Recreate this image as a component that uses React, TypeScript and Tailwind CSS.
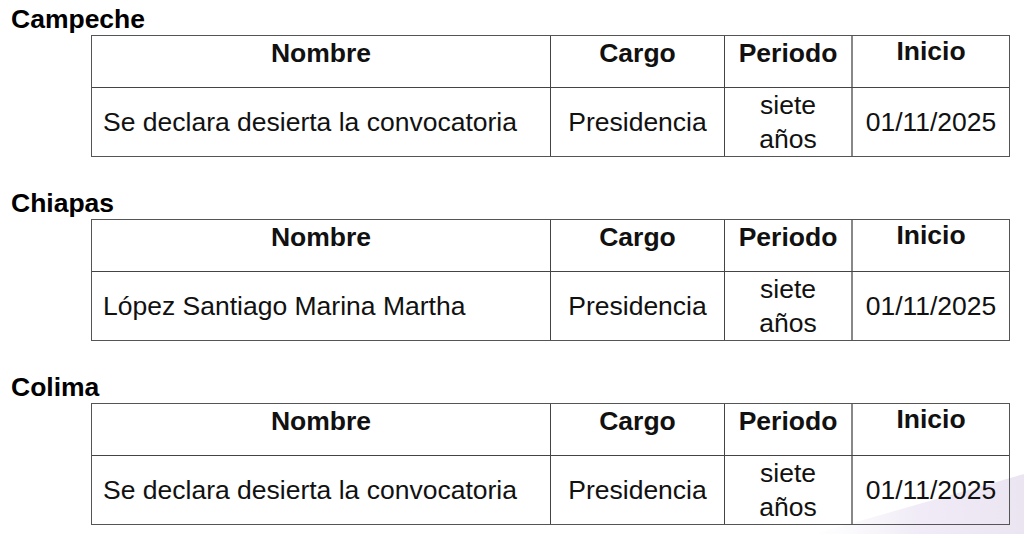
const rows = [
  { estado: "Campeche", nombre: "Se declara desierta la convocatoria" },
  { estado: "Chiapas", nombre: "López Santiago Marina Martha" },
  { estado: "Colima", nombre: "Se declara desierta la convocatoria" }
];

function EstadoTable({ estado, nombre }: { estado: string; nombre: string }) {
  return (
    <section>
      <h2 className="pl-[11px] text-[26.5px] font-bold leading-[31px] text-black">{estado}</h2>
      <div className="ml-[91px] w-[919px] border border-[#555]">
        <div className="grid h-[52px] grid-cols-[458px_174px_127px_158px] border-b border-[#444] font-bold">
          <div className="pt-[2px] text-center">Nombre</div>
          <div className="border-l border-[#444] pt-[2px] text-center">Cargo</div>
          <div className="border-l border-[#444] pt-[2px] text-center">Periodo</div>
          <div className="border-l-2 border-[#888] pt-0 text-center">Inicio</div>
        </div>
        <div className="grid h-[68px] grid-cols-[458px_174px_127px_158px]">
          <div className="flex items-center pl-[11px]">{nombre}</div>
          <div className="flex items-center justify-center border-l border-[#444]">Presidencia</div>
          <div className="flex items-center justify-center border-l border-[#444] text-center leading-[34px]">
            siete
            <br />
            años
          </div>
          <div className="flex items-center justify-center border-l-2 border-[#888]">01/11/2025</div>
        </div>
      </div>
    </section>
  );
}

export default function App() {
  return (
    <div
      className="relative h-[534px] w-[1024px] overflow-hidden bg-white pt-[4px] text-[26.5px] leading-[31px] text-[#111]"
      style={{ fontFamily: '"Liberation Sans", Arial, sans-serif' }}
    >
      <svg className="pointer-events-none absolute bottom-0 right-0" width="210" height="64" viewBox="0 0 210 64">
        <defs>
          <linearGradient id="lav" x1="0" y1="0" x2="1" y2="0">
            <stop offset="0" stopColor="#f3f0f8" stopOpacity="0" />
            <stop offset="0.5" stopColor="#f0ebf6" />
            <stop offset="1" stopColor="#ebe5f2" />
          </linearGradient>
        </defs>
        <polygon points="0,64 210,4 210,64" fill="url(#lav)" />
      </svg>
      <div className="relative flex flex-col gap-[31px]">
        {rows.map((r) => (
          <EstadoTable key={r.estado} estado={r.estado} nombre={r.nombre} />
        ))}
      </div>
    </div>
  );
}
